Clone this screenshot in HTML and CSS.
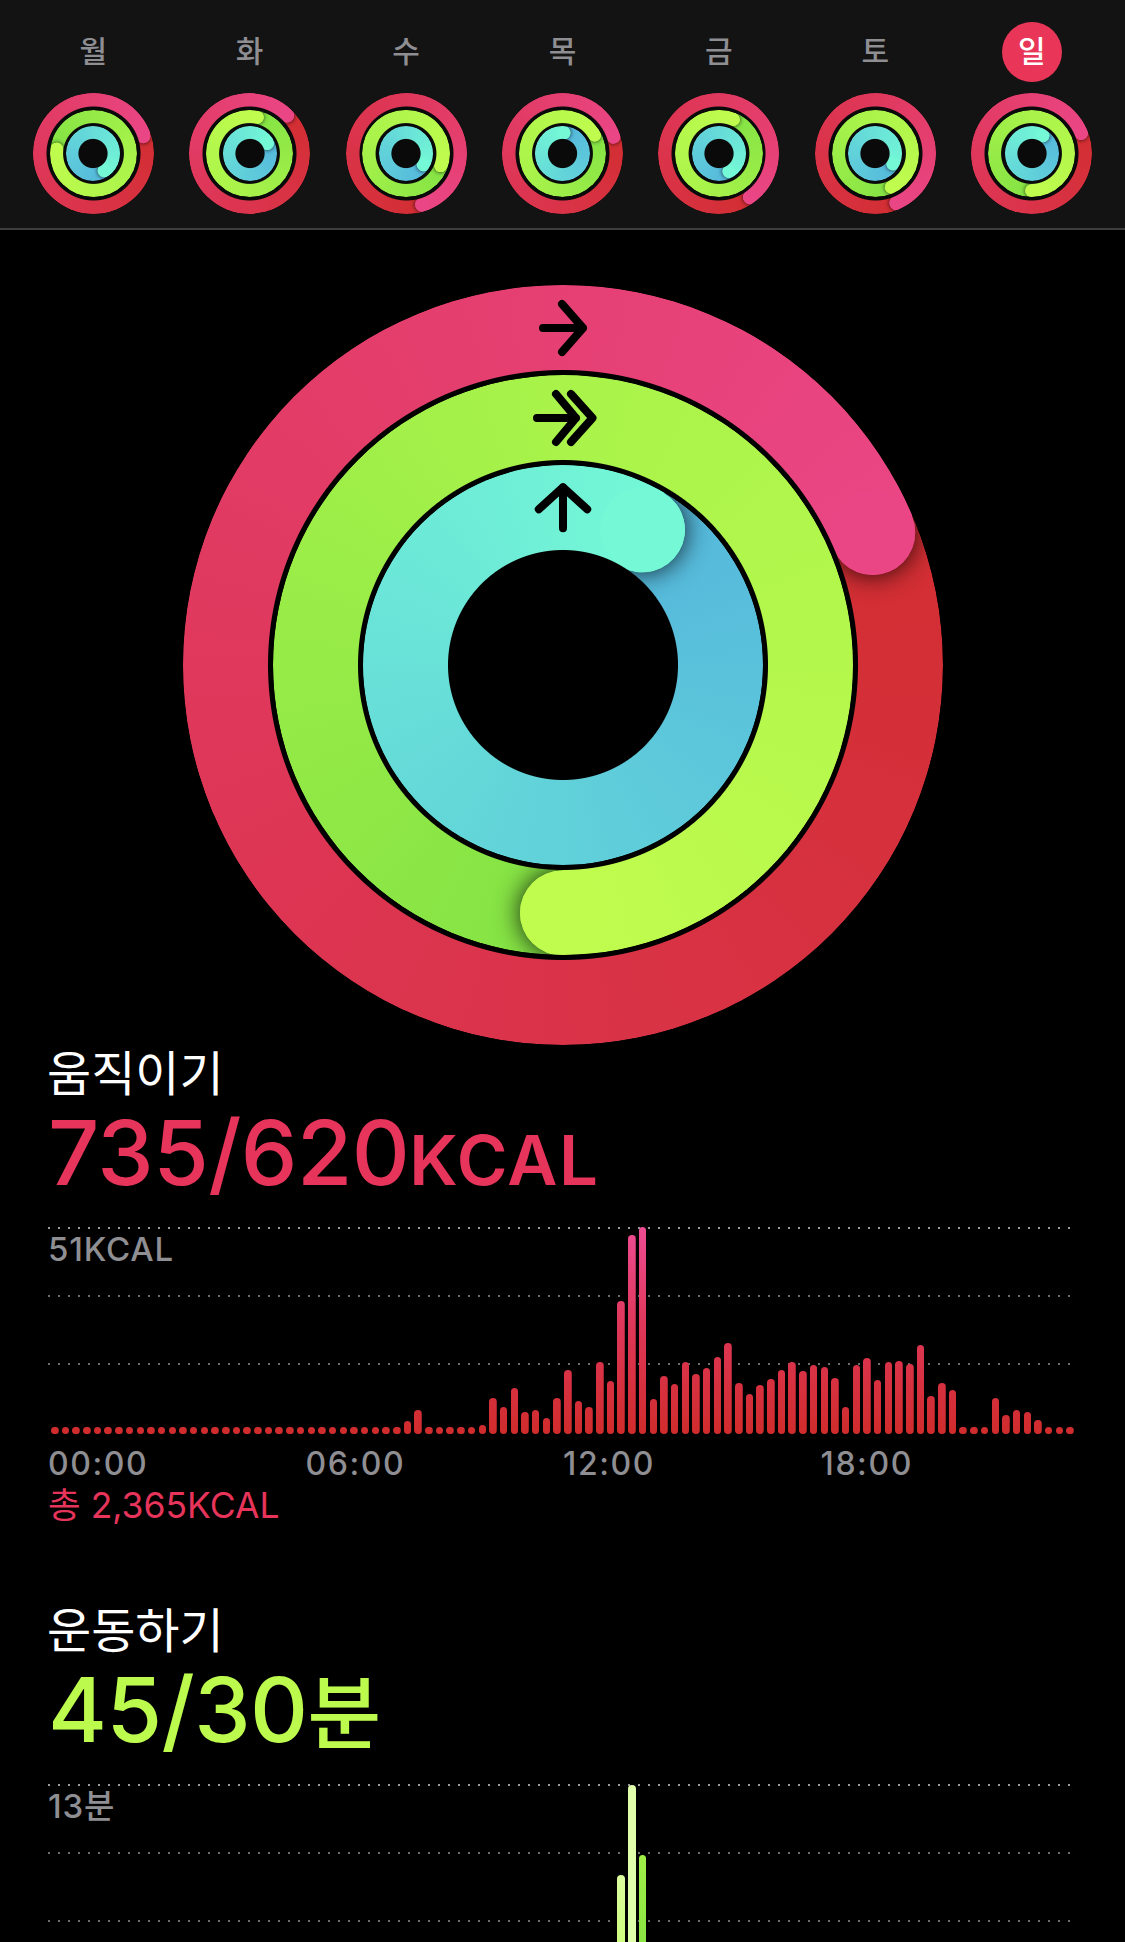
FILE: index.html
```html
<!DOCTYPE html>
<html lang="ko">
<head>
  <meta charset="UTF-8">
  <meta name="viewport" content="width=device-width, initial-scale=1.0">
  <title>활동</title>
  <link rel="stylesheet" href="styles.css">
</head>
<body>
  <header class="week">
    <div class="day"><span class="day-label">월</span><div class="rings rings-small" data-ends="70.5,277,147"></div></div>
    <div class="day"><span class="day-label">화</span><div class="rings rings-small" data-ends="44,12,61"></div></div>
    <div class="day"><span class="day-label">수</span><div class="rings rings-small" data-ends="162,109,123"></div></div>
    <div class="day"><span class="day-label">목</span><div class="rings rings-small" data-ends="71,60,4"></div></div>
    <div class="day"><span class="day-label">금</span><div class="rings rings-small" data-ends="144,23.5,151"></div></div>
    <div class="day"><span class="day-label">토</span><div class="rings rings-small" data-ends="157,155,120"></div></div>
    <div class="day"><span class="day-label day-today">일</span><div class="rings rings-small" data-ends="66.8,180,30.5"></div></div>
  </header>

  <div class="today-rings">
    <div class="rings rings-big" data-ends="66.8,180,30.5"></div>
    <svg class="ring-arrows" viewBox="0 0 760 760" fill="none" stroke="#000" stroke-width="8" stroke-linecap="round" stroke-linejoin="round">
      <path d="M360 43H400M379 19L400 43L379 67"/>
      <path d="M354 133H393M373 109L393 133L373 157M388 109L409.5 133L388 157"/>
      <path d="M380 243.3V202.3M355.8 224.3L380 202.3L404.2 224.3"/>
    </svg>
  </div>

  <section class="stat stat-move">
    <h2 class="stat-title">움직이기</h2>
    <p class="stat-value">735/620<span class="stat-unit">KCAL</span></p>
    <div class="chart">
      <div class="chart-grid"><i></i><i></i><i></i></div>
      <span class="chart-max">51KCAL</span>
      <div class="bars" data-kind="move"></div>
    </div>
    <div class="axis"><span>00:00</span><span>06:00</span><span>12:00</span><span>18:00</span></div>
    <p class="stat-total">총 2,365KCAL</p>
  </section>

  <section class="stat stat-exercise">
    <h2 class="stat-title">운동하기</h2>
    <p class="stat-value">45/30<span class="stat-unit">분</span></p>
    <div class="chart">
      <div class="chart-grid"><i></i><i></i><i></i></div>
      <span class="chart-max">13분</span>
      <div class="bars" data-kind="exercise"></div>
    </div>
  </section>

  <script src="app.js"></script>
</body>
</html>
```

FILE: styles.css
```css
html, body {
  height: 1942px;
  overflow: hidden;
}
body {
  margin: 0;
  background: #000;
  color: #fff;
  font-family: Inter, "Noto Sans CJK KR", sans-serif;
}

/* week strip */
.week {
  display: grid;
  grid-template-columns: repeat(7, 1fr);
  padding: 22px 15px 14px;
  background: #131313;
  border-bottom: 2px solid #3e3e3e;
}
.day {
  display: flex;
  flex-direction: column;
  align-items: center;
  gap: 11px;
}
.day-label {
  width: 60px;
  height: 60px;
  line-height: 59px;
  border-radius: 50%;
  text-align: center;
  font-size: 30px;
  font-weight: 500;
  color: #8e8e93;
}
.day-today {
  background: #e93658;
  color: #fff;
}

/* activity rings */
.rings {
  position: relative;
  border-radius: 50%;
}
.rings-small {
  width: 121px;
  height: 121px;
  background: #0a0a0a;
  --shadow: 4px;
  --move-out: 60.5px;
  --move-in: 47px;
  --exercise-out: 43.6px;
  --exercise-in: 30.4px;
  --stand-out: 27.1px;
  --stand-in: 14.6px;
}
.rings-big {
  width: 760px;
  height: 760px;
  background: #000;
  --shadow: 26px;
  --move-out: 380px;
  --move-in: 295px;
  --exercise-out: 290px;
  --exercise-in: 205px;
  --stand-out: 200px;
  --stand-in: 115px;
}
.band {
  position: absolute;
  left: 50%;
  top: 50%;
  width: calc(var(--out) * 2);
  height: calc(var(--out) * 2);
  margin: calc(var(--out) * -1);
  border-radius: 50%;
  overflow: hidden;
  -webkit-mask: radial-gradient(circle at center, transparent calc(var(--in) - .5px), #000 calc(var(--in) + .5px));
  mask: radial-gradient(circle at center, transparent calc(var(--in) - .5px), #000 calc(var(--in) + .5px));
}
.band-move {
  --out: var(--move-out);
  --in: var(--move-in);
  --from: #d22e32;
  --mid: #de3656;
  --to: #ea4685;
}
.band-exercise {
  --out: var(--exercise-out);
  --in: var(--exercise-in);
  --from: #84e344;
  --mid: #a9f34a;
  --to: #c0fc4e;
}
.band-stand {
  --out: var(--stand-out);
  --in: var(--stand-in);
  --from: #55b7dc;
  --mid: #63d6d9;
  --to: #74f8d6;
}
.band-base,
.band-back {
  position: absolute;
  inset: 0;
}
.band-base {
  background: conic-gradient(from var(--end), var(--from), var(--mid) 50%, var(--to));
}
.band-back {
  background: conic-gradient(from var(--end), transparent 50%, var(--mid) 50%, var(--to));
}
.band-cap {
  position: absolute;
  left: 50%;
  top: 50%;
  --size: calc(var(--out) - var(--in));
  width: var(--size);
  height: var(--size);
  margin: calc(var(--size) / -2);
  border-radius: 50%;
  background: var(--to);
  transform: rotate(var(--end)) translateY(calc((var(--out) + var(--in)) / -2));
}
.band-cap-shadow {
  box-shadow: 0 0 var(--shadow) rgba(0, 0, 0, .85);
}

.today-rings {
  position: relative;
  width: 760px;
  height: 760px;
  margin: 55px auto 0;
}
.ring-arrows {
  position: absolute;
  inset: 0;
}

/* stats */
.stat {
  padding-left: 48px;
}
.stat-exercise {
  margin-top: 74px;
}
.stat-title {
  margin: 0 0 0 -1px;
  height: 58px;
  line-height: 58px;
  font-size: 48px;
  font-weight: 400;
  color: #fff;
}
.stat-value {
  margin: 0;
  height: 97px;
  line-height: 99px;
  font-size: 90px;
  font-weight: 450;
  letter-spacing: -.6px;
}
.stat-unit {
  font-size: 69px;
  font-weight: 600;
  letter-spacing: 1.5px;
}
.stat-move .stat-value { color: #e6345a; }
.stat-exercise .stat-value { color: #bcfb4d; }
.stat-exercise .stat-unit {
  font-size: 80px;
  font-weight: 500;
  letter-spacing: 0;
}

.chart {
  display: grid;
  width: 1026px;
  height: 207px;
  margin-top: 27px;
}
.chart > * {
  grid-area: 1 / 1;
}
.chart-grid {
  display: flex;
  flex-direction: column;
  gap: 66px;
}
.chart-grid i {
  display: block;
  width: 1022px;
  height: 2px;
  background: linear-gradient(to right, #6d6d6d 2px, transparent 2px) 0 0 / 10px 2px;
}
.chart-grid i:first-child {
  background-image: linear-gradient(to right, #9a9a9a 2px, transparent 2px);
}
.chart-max {
  margin-top: 2px;
  height: 40px;
  line-height: 40px;
  font-size: 33px;
  font-weight: 500;
  letter-spacing: .8px;
  color: #8e8e93;
}
.bars {
  display: grid;
  grid-template-columns: repeat(96, 7.5px);
  justify-content: space-between;
  align-items: end;
  padding-left: 3px;
}
.bar {
  border-radius: 4px;
  background: linear-gradient(to top, #d02c2c, #de3656 50%, #ee4c93) bottom / 100% 207px no-repeat;
}
.bar-pale { background: linear-gradient(#dcfd9e, #c4fb68); }
.bar-light { background: #e0ffaa; }
.bar-green { background: linear-gradient(#a0ef48, #7fdf3f); }

.axis {
  display: grid;
  grid-template-columns: repeat(4, 1fr);
  width: 1030px;
  margin-top: 10px;
  height: 40px;
  line-height: 40px;
  font-size: 32px;
  font-weight: 500;
  letter-spacing: 1.6px;
  color: #8e8e93;
}
.stat-total {
  margin: 0;
  height: 44px;
  line-height: 44px;
  font-size: 35.5px;
  color: #e6345a;
}
```

FILE: app.js
```js
// rings for each day, ends are the angles where the second lap stops
var BANDS = ['move', 'exercise', 'stand'];

document.querySelectorAll('.rings').forEach(function (rings) {
  var ends = rings.dataset.ends.split(',');
  BANDS.forEach(function (name, i) {
    var band = document.createElement('div');
    band.className = 'band band-' + name;
    band.style.setProperty('--end', ends[i] + 'deg');
    band.innerHTML =
      '<div class="band-base"></div>' +
      '<div class="band-cap band-cap-shadow"></div>' +
      '<div class="band-back"></div>' +
      '<div class="band-cap"></div>';
    rings.appendChild(band);
  });
});

// bar heights in px, one per 15 minutes
var DOT = 7.5;
var MOVE = [];
for (var i = 0; i < 33; i++) MOVE.push(DOT);
MOVE = MOVE.concat([13, 24, DOT, DOT, DOT, DOT, DOT, 9, 36, 27, 46, 22, 24, 16, 36,
  64, 33, 27, 72, 53, 133, 199, 207, 35, 58, 50, 72, 60, 66, 77, 91, 51, 40, 49, 55,
  64, 72, 63, 69, 67, 56, 27, 69, 76, 54, 72, 73, 70, 89, 38, 51, 44, DOT, DOT, DOT,
  36, 19, 24, 22, 14, DOT, DOT, DOT]);

function fillMove(el) {
  MOVE.forEach(function (h) {
    var bar = document.createElement('div');
    bar.className = 'bar';
    bar.style.height = h + 'px';
    el.appendChild(bar);
  });
}

function fillExercise(el) {
  var bars = { 53: [116, 'bar-pale'], 54: [206, 'bar-light'], 55: [136, 'bar-green'] };
  for (var i = 0; i < 96; i++) {
    var bar = document.createElement('div');
    if (bars[i]) {
      bar.className = 'bar ' + bars[i][1];
      bar.style.height = bars[i][0] + 'px';
    }
    el.appendChild(bar);
  }
}

document.querySelectorAll('.bars').forEach(function (el) {
  if (el.dataset.kind === 'move') fillMove(el);
  else fillExercise(el);
});
```
